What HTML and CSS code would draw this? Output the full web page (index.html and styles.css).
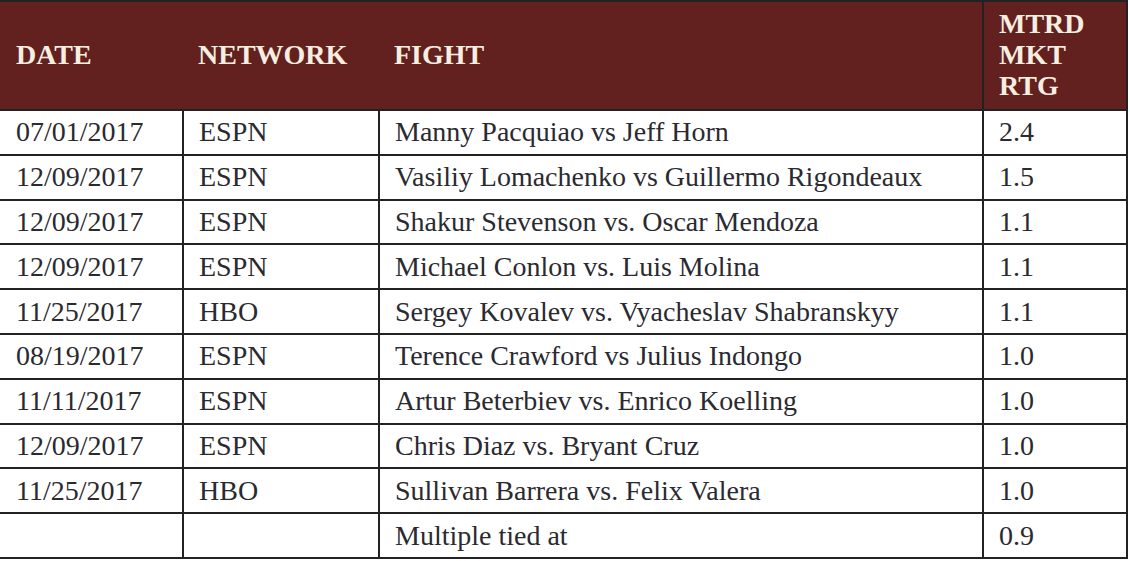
FILE: index.html
```html
<!DOCTYPE html>
<html>
<head>
<meta charset="utf-8">
<link rel="stylesheet" href="styles.css">
</head>
<body>
<table class="ratings">
  <colgroup>
    <col class="c-date">
    <col class="c-net">
    <col class="c-fight">
    <col class="c-rtg">
  </colgroup>
  <thead>
    <tr>
      <th>DATE</th>
      <th>NETWORK</th>
      <th>FIGHT</th>
      <th>MTRD<br>MKT<br>RTG</th>
    </tr>
  </thead>
  <tbody>
    <tr><td>07/01/2017</td><td>ESPN</td><td>Manny Pacquiao vs Jeff Horn</td><td>2.4</td></tr>
    <tr><td>12/09/2017</td><td>ESPN</td><td>Vasiliy Lomachenko vs Guillermo Rigondeaux</td><td>1.5</td></tr>
    <tr><td>12/09/2017</td><td>ESPN</td><td>Shakur Stevenson vs. Oscar Mendoza</td><td>1.1</td></tr>
    <tr><td>12/09/2017</td><td>ESPN</td><td>Michael Conlon vs. Luis Molina</td><td>1.1</td></tr>
    <tr><td>11/25/2017</td><td>HBO</td><td>Sergey Kovalev vs. Vyacheslav Shabranskyy</td><td>1.1</td></tr>
    <tr><td>08/19/2017</td><td>ESPN</td><td>Terence Crawford vs Julius Indongo</td><td>1.0</td></tr>
    <tr><td>11/11/2017</td><td>ESPN</td><td>Artur Beterbiev vs. Enrico Koelling</td><td>1.0</td></tr>
    <tr><td>12/09/2017</td><td>ESPN</td><td>Chris Diaz vs. Bryant Cruz</td><td>1.0</td></tr>
    <tr><td>11/25/2017</td><td>HBO</td><td>Sullivan Barrera vs. Felix Valera</td><td>1.0</td></tr>
    <tr><td></td><td></td><td>Multiple tied at</td><td>0.9</td></tr>
  </tbody>
</table>
</body>
</html>
```

FILE: styles.css
```css
html, body {
  margin: 0;
  padding: 0;
  background: #ffffff;
}

.ratings {
  border-collapse: collapse;
  width: 1128px;
  margin-left: -2px;
  table-layout: fixed;
  font-family: "Liberation Serif", "Times New Roman", serif;
  border: 2px solid #222222;
}

.c-date { width: 184px; }
.c-net { width: 196px; }
.c-fight { width: 604px; }
.c-rtg { width: 144px; }

.ratings th {
  background: #62201f;
  color: #f6eee0;
  font-weight: bold;
  font-size: 28px;
  line-height: 31px;
  text-align: left;
  vertical-align: middle;
  padding: 4px 10px 6px 15px;
  height: 97px;
  border: 2px solid #222222;
  border-left: none;
  border-right: none;
}

.ratings th:first-child {
  padding-left: 16px;
}

.ratings th:last-child {
  border-left: 2px solid #222222;
}

.ratings td {
  color: #2a2a30;
  font-size: 28px;
  line-height: 30px;
  height: 44.8px;
  padding: 0 10px 0 15px;
  vertical-align: middle;
  border: 2px solid #222222;
  box-sizing: border-box;
  white-space: nowrap;
}

.ratings td:first-child {
  padding-left: 16px;
}
```
